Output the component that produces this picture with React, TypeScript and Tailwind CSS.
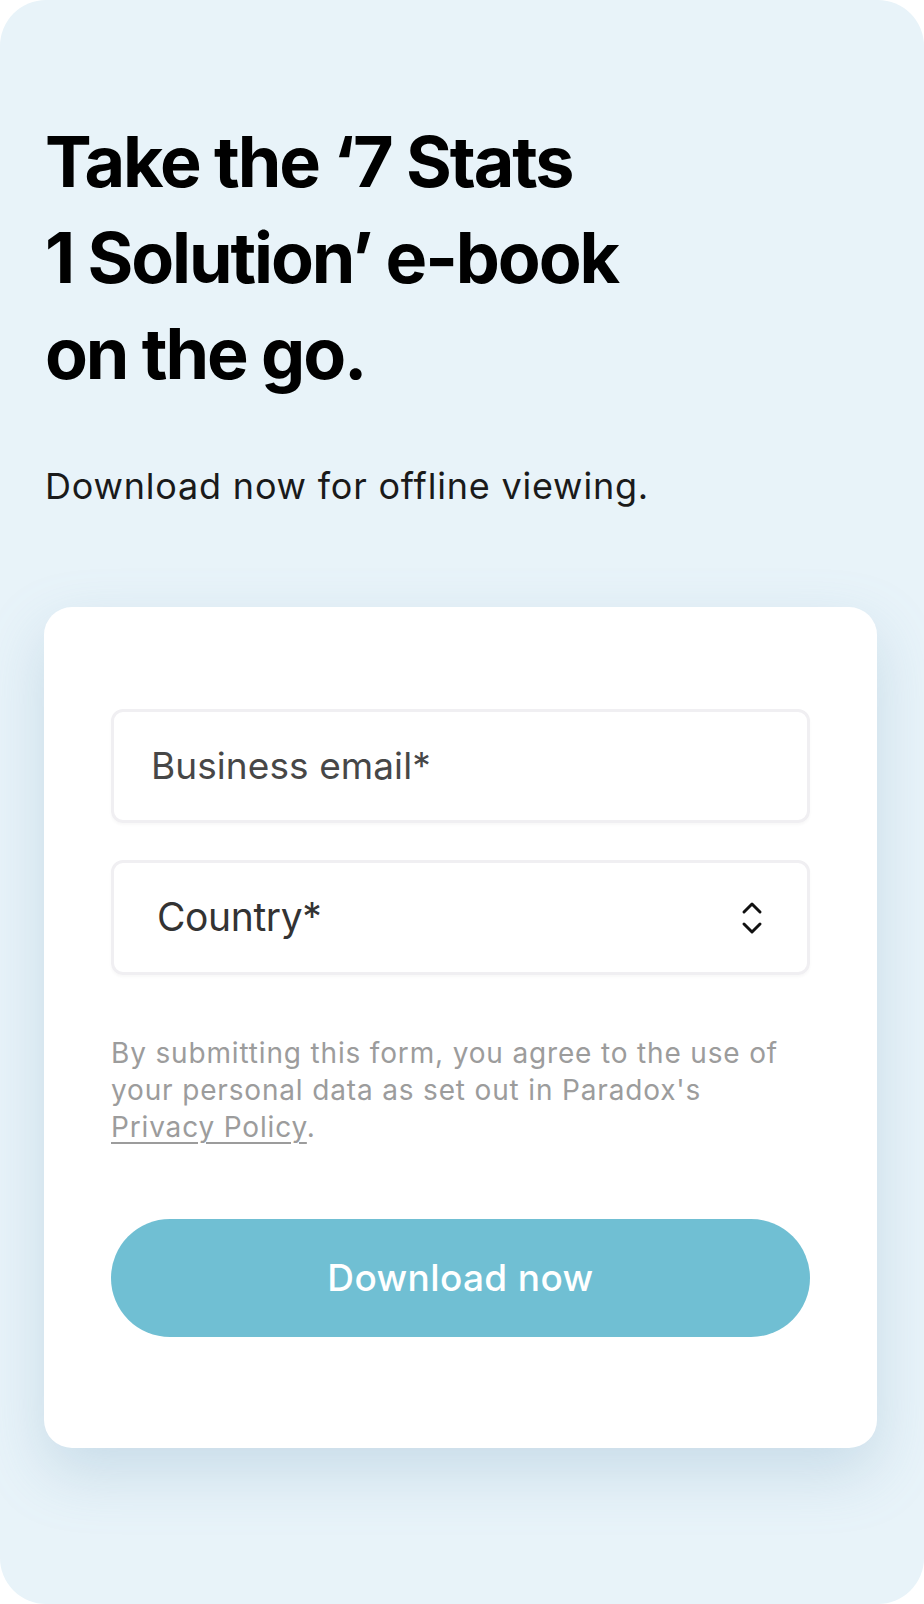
import React from 'react';

const ChevronUpDown: React.FC = () => (
  <svg width="22" height="34" viewBox="0 0 22 34" fill="none" stroke="#111" strokeWidth="3" strokeLinecap="round" strokeLinejoin="round">
    <path d="M3 11 11 3 19 11" />
    <path d="M3 23 11 31 19 23" />
  </svg>
);

const App: React.FC = () => {
  return (
    <div className="w-[924px] h-[1604px] bg-white" style={{ fontFamily: 'Inter, "Noto Sans", sans-serif' }}>
      <div className="h-full rounded-[46px] bg-[#e8f3f9] px-[45px] pt-[114px]">
        <h1 className="text-[70px] leading-[96px] font-bold tracking-[-0.03em] text-black">
          Take the ‘7 Stats
          <br />
          1 Solution’ e-book
          <br />
          on the go.
        </h1>

        <p className="mt-[60px] text-[36px] leading-[48px] text-[#1a1a1a] tracking-[0.022em]">
          Download now for offline viewing.
        </p>

        <div className="mt-[97px] w-[833px] -ml-[1px] rounded-[28px] bg-white px-[67px] pt-[102px] pb-[111px] shadow-[0_24px_60px_rgba(120,160,190,0.28)]">
          <div className="flex h-[114px] items-center rounded-[12px] border-[3px] border-[#f0eff2] pl-[37px] shadow-[0_2px_3px_rgba(0,0,0,0.03)]">
            <span className="text-[37px] text-[#474747] tracking-[0.002em]">Business email*</span>
          </div>

          <div className="mt-[37px] flex h-[115px] items-center justify-between rounded-[12px] border-[3px] border-[#f0eff2] pl-[43px] pr-[44px] shadow-[0_2px_3px_rgba(0,0,0,0.03)]">
            <span className="text-[39px] text-[#333] tracking-[-0.01em]">Country*</span>
            <ChevronUpDown />
          </div>

          <p className="mt-[60px] text-[28px] leading-[37px] text-[#9c9c9c] tracking-[0.03em]">
            By submitting this form, you agree to the use of
            <br />
            your personal data as set out in Paradox's
            <br />
            <span className="underline decoration-[2px] underline-offset-[5px]">Privacy Policy</span>.
          </p>

          <button className="mt-[73px] flex h-[118px] w-full items-center justify-center rounded-full bg-[#70bfd3] text-[37px] font-medium tracking-[0.01em] text-white">
            Download now
          </button>
        </div>
      </div>
    </div>
  );
};

export default App;
